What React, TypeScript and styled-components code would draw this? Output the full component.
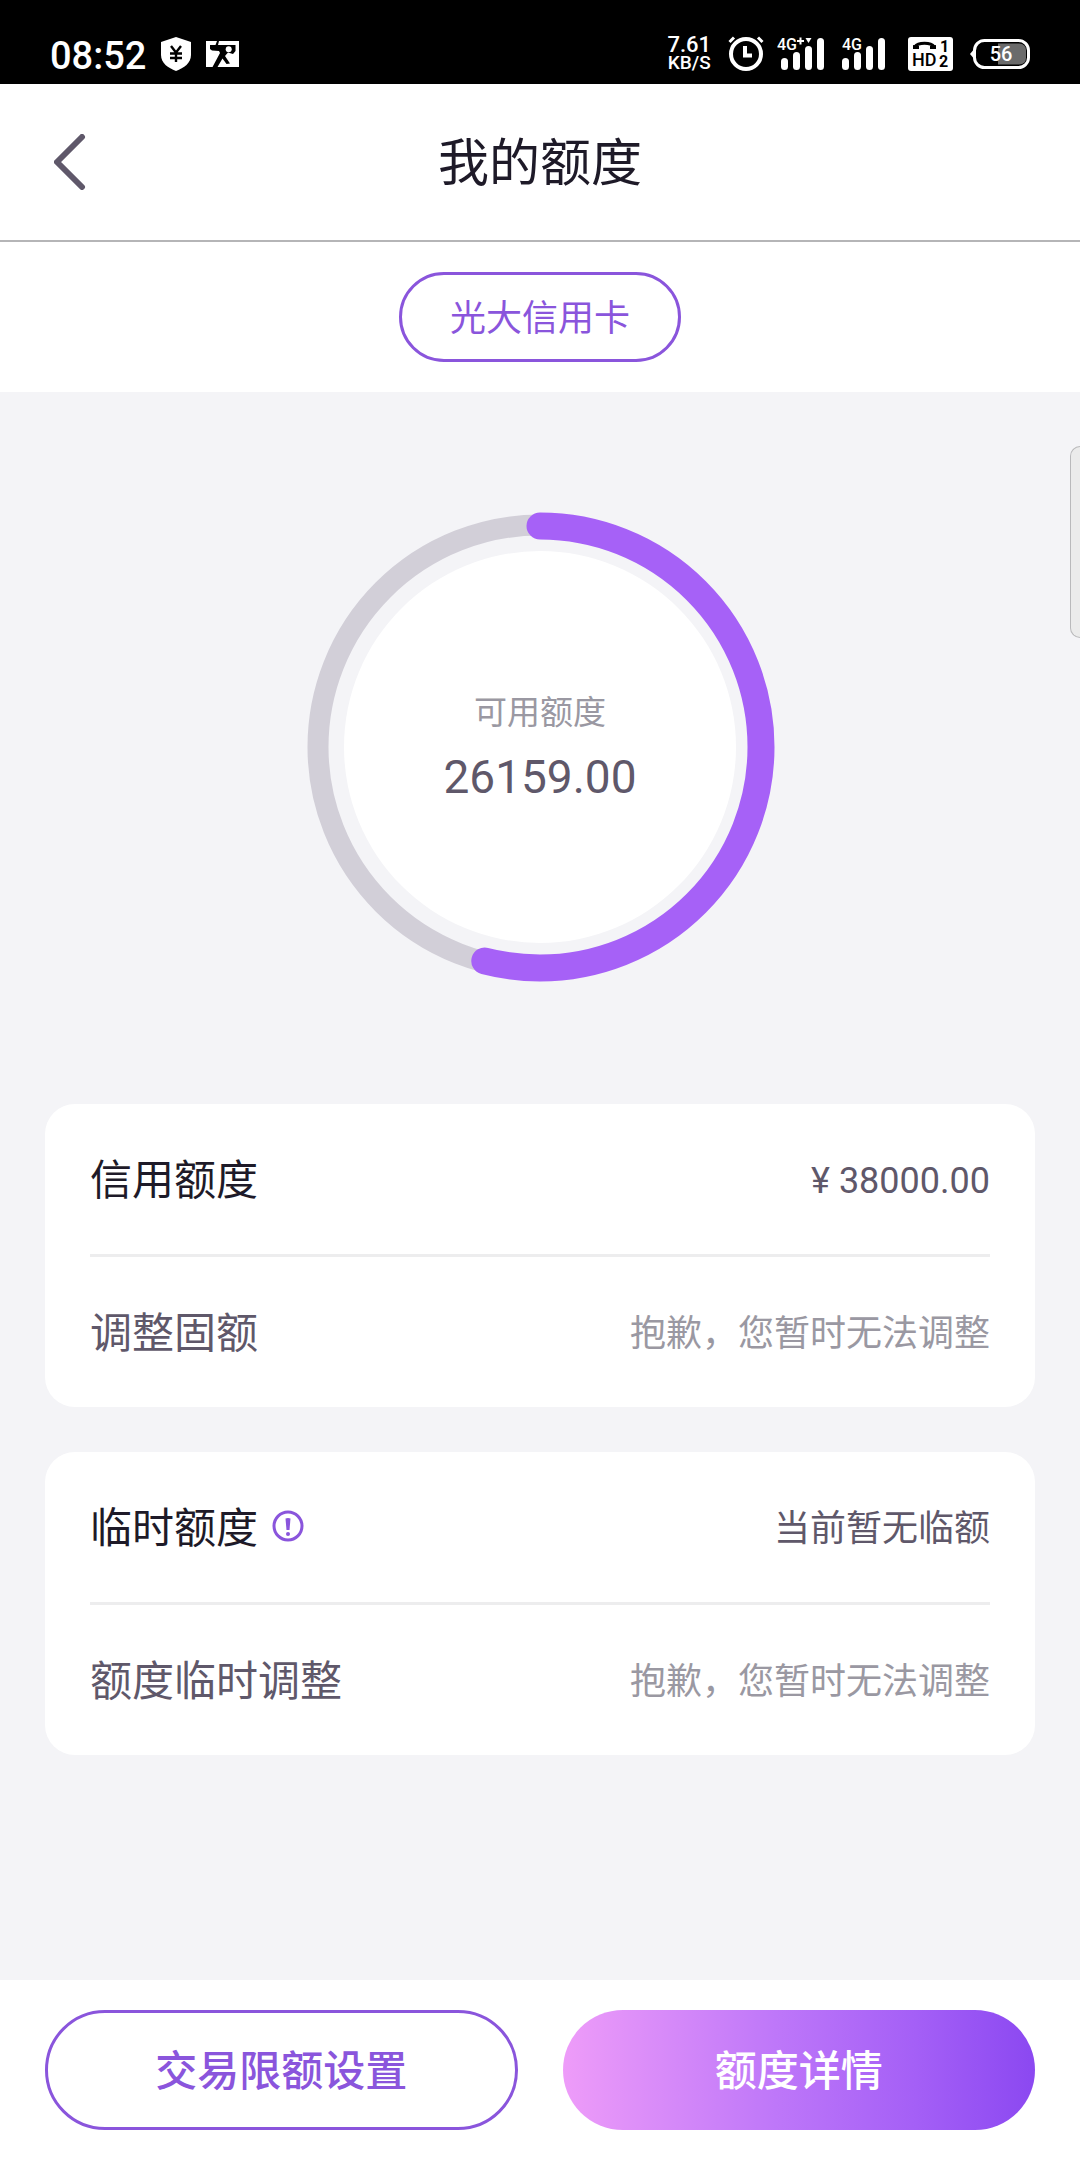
import React from "react";
import styled, { createGlobalStyle, css } from "styled-components";

const color = {
  ink: "#1e1a28",
  body: "#5f586a",
  muted: "#9a98a2",
  purple: "#8a55dc",
  ring: "#a661f7",
  track: "#d2cfd8",
  page: "#f4f4f7",
  rule: "#ededee",
};

const GlobalStyle = createGlobalStyle`
  *, *::before, *::after { box-sizing: border-box; }
  body {
    margin: 0;
    background: ${color.page};
    color: ${color.ink};
    font-family: Roboto, "Noto Sans CJK SC", sans-serif;
  }
  button { font: inherit; cursor: pointer; }
  h1, h2, p, dl, dt, dd { margin: 0; font-weight: 400; }
  svg { display: block; }
`;

const Screen = styled.div`
  position: relative;
  display: flex;
  flex-direction: column;
  min-height: 100vh;
`;

/* ---------- status bar ---------- */

const StatusBar = styled.div`
  display: flex;
  align-items: flex-end;
  justify-content: space-between;
  height: 84px;
  padding: 0 50px 10px;
  background: #000;
  color: #fff;
`;

const StatusGroup = styled.div<{ $gap: number }>`
  display: flex;
  align-items: center;
  gap: ${(p) => p.$gap}px;
  height: 40px;
`;

const Clock = styled.time`
  padding-top: 3px;
  font-size: 38px;
  font-weight: 500;
  line-height: 40px;
`;

const Speed = styled.div`
  display: flex;
  flex-direction: column;
  align-items: center;
  font-size: 22px;
  font-weight: 500;
  line-height: 18px;
`;

const SpeedUnit = styled.span`
  font-size: 19px;
  line-height: 18px;
`;

const ShieldIcon = () => (
  <svg width="30" height="34" viewBox="0 0 30 34" aria-hidden="true">
    <path d="M15 0 L30 5 V18 C30 26 23 31 15 34 C7 31 0 26 0 18 V5 Z" fill="#fff" />
    <path d="M10 9 L15 15.500 L20 9 M15 15.500 V25 M9 16.500 H21 M9 21 H21" fill="none" stroke="#000" strokeWidth="2.400" />
  </svg>
);

const PictureIcon = () => (
  <svg width="33" height="26" viewBox="0 0 33 26" aria-hidden="true">
    <path d="M0 0 H33 V26 H0 Z" fill="#fff" />
    <path d="M11 0 H13 L12 4 H29.500 V10 L27 13 L22 11.500 L19 15 L24 22.500 L20.500 23 L16.500 17.500 L11.500 26 H6.500 L14 12 L13 10 L6 9.500 L4 8 V4 H9.500 Z" fill="#000" />
    <circle cx="22.700" cy="8.300" r="3" fill="#fff" />
  </svg>
);

const AlarmIcon = () => (
  <svg width="36" height="36" viewBox="0 0 36 36" aria-hidden="true">
    <g fill="none" stroke="#fff">
      <circle cx="18" cy="18" r="15" strokeWidth="4" />
      <path d="M17 10 V19.500 H24" strokeWidth="4" />
      <path d="M1.500 6 L6 1.500 M34.500 6 L30 1.500" strokeWidth="3" />
    </g>
  </svg>
);

const SignalIcon = ({ plus }: { plus?: boolean }) => (
  <svg width={plus ? 52 : 49} height="36" viewBox={plus ? "0 0 52 36" : "4 0 49 36"} role="img" aria-label={plus ? "4G+" : "4G"}>
    <g fill="#fff">
      <rect x="4" y="22" width="7" height="12" rx="3.500" />
      <rect x="16" y="16" width="7" height="18" rx="3.500" />
      <rect x="28" y="10" width="7" height="24" rx="3.500" />
      <rect x="40" y="2" width="7" height="32" rx="3.500" />
      {plus && <path d="M28.500 2 H34.500 L31.500 7 Z" />}
    </g>
    <text x={plus ? 0 : 4} y="14" fill="#fff" stroke="#000" strokeWidth="2" paintOrder="stroke" fontSize="16" fontWeight="500">
      4G
    </text>
    {plus && <path d="M20 5 H27 M23.500 1.500 V8.500" stroke="#fff" strokeWidth="2" />}
  </svg>
);

const CallIcon = () => (
  <svg width="45" height="34" viewBox="0 0 45 34" role="img" aria-label="HD">
    <rect width="45" height="34" rx="3" fill="#fff" />
    <path d="M7 9.500 C10 5 23 5 26 9.500" fill="none" stroke="#000" strokeWidth="3" />
    <path d="M5 8 L11 9 V12 H5 Z M28 8 L22 9 V12 H28 Z" fill="#000" />
    <text x="4" y="29" fontSize="18" fontWeight="500">HD</text>
    <text x="32" y="15" fontSize="16" fontWeight="700">1</text>
    <text x="31" y="30" fontSize="16" fontWeight="700">2</text>
  </svg>
);

const BatteryIcon = () => (
  <svg width="60" height="30" viewBox="0 0 60 30" role="img" aria-label="56">
    <path d="M5 9 L0 15 L5 21 Z" fill="#fff" />
    <rect x="4.500" y="1.500" width="54" height="27" rx="10" fill="#000" stroke="#fff" strokeWidth="3" />
    <path d="M28 4.500 H49 Q56 5 56 11 V19 Q56 25 49 25.500 H28 Z" fill="#6b6b6b" />
    <text x="31" y="22" fill="#fff" fontSize="20" fontWeight="500" textAnchor="middle">56</text>
  </svg>
);

/* ---------- header ---------- */

const Header = styled.header`
  display: grid;
  grid-template-columns: 1fr auto 1fr;
  align-items: center;
  height: 158px;
  padding: 0 36px;
  background: #fff;
  border-bottom: 2px solid #b5b5b7;
`;

const BackButton = styled.button`
  justify-self: start;
  padding: 12px 18px;
  border: 0;
  background: none;
  color: ${color.body};
`;

const Title = styled.h1`
  padding-top: 4px;
  font-size: 51px;
  line-height: 72px;
`;

const CardPicker = styled.div`
  display: flex;
  justify-content: center;
  padding: 30px 45px;
  background: #fff;
`;

const pill = css`
  display: flex;
  align-items: center;
  justify-content: center;
  border: 3px solid ${color.purple};
  border-radius: 60px;
  background: #fff;
  color: ${color.purple};
`;

const Chip = styled.button`
  ${pill}
  height: 90px;
  padding: 4px 48px 0;
  font-size: 36px;
  line-height: 54px;
`;

/* ---------- gauge ---------- */

const Main = styled.main`
  display: flex;
  flex: 1;
  flex-direction: column;
  gap: 45px;
  padding: 120px 45px 45px;
`;

const Gauge = styled.section`
  display: grid;
  align-items: center;
  justify-items: center;
  margin-bottom: 77px;

  > * { grid-area: 1 / 1; }
`;

const GaugeText = styled.div`
  text-align: center;
  line-height: 64px;
  padding-bottom: 4px;
`;

const GaugeLabel = styled.p`
  color: ${color.muted};
  font-size: 33px;
`;

const GaugeValue = styled.p`
  color: ${color.body};
  font-size: 46px;
`;

const RADIUS = 221;
const LENGTH = 2 * Math.PI * RADIUS;

const GaugeRing = ({ ratio }: { ratio: number }) => (
  <svg width="470" height="470" viewBox="0 0 470 470" aria-hidden="true">
    <circle cx="235" cy="235" r="196" fill="#fff" />
    <circle cx="235" cy="235" r="222" fill="none" stroke={color.track} strokeWidth="21" />
    <circle
      cx="235"
      cy="235"
      r={RADIUS}
      fill="none"
      stroke={color.ring}
      strokeWidth="27"
      strokeLinecap="round"
      strokeDasharray={`${LENGTH * ratio} ${LENGTH}`}
      transform="rotate(-90 235 235)"
    />
  </svg>
);

/* ---------- cards ---------- */

const Card = styled.dl`
  padding: 0 45px;
  border-radius: 30px;
  background: #fff;
`;

const Row = styled.div`
  display: flex;
  align-items: center;
  justify-content: space-between;
  gap: 24px;
  height: 150px;
  padding-top: 4px;

  & + & {
    height: 153px;
    border-top: 3px solid ${color.rule};
  }
`;

const Term = styled.dt<{ $soft?: boolean }>`
  display: flex;
  align-items: center;
  gap: 14px;
  color: ${(p) => (p.$soft ? color.body : color.ink)};
  font-size: 42px;
  line-height: 60px;
`;

const Value = styled.dd<{ $soft?: boolean }>`
  color: ${(p) => (p.$soft ? color.muted : color.body)};
  font-size: 36px;
  line-height: 54px;
`;

const HintButton = styled.button`
  padding: 0 0 6px;
  border: 0;
  background: none;
  color: ${color.purple};
`;

const HintIcon = () => (
  <svg width="32" height="32" viewBox="0 0 32 32" aria-hidden="true">
    <circle cx="16" cy="16" r="14" fill="none" stroke="currentColor" strokeWidth="3" />
    <path d="M13.500 8.500 Q16 7.500 18.500 8.500 L17.500 20 H14.500 Z" fill="currentColor" />
    <circle cx="16" cy="24" r="2" fill="currentColor" />
  </svg>
);

/* ---------- footer ---------- */

const Footer = styled.footer`
  display: grid;
  grid-template-columns: 1fr 1fr;
  gap: 45px;
  padding: 30px 45px;
  background: #fff;
`;

const ActionButton = styled.button<{ $filled?: boolean }>`
  ${pill}
  height: 120px;
  padding-top: 4px;
  font-size: 42px;
  font-weight: 500;
  line-height: 60px;

  ${(p) =>
    p.$filled &&
    css`
      border: 0;
      background: linear-gradient(90deg, #ee9cf9 0%, #be77f9 45%, #a45ff6 75%, #8b48f1 100%);
      color: #fff;
    `}
`;

/* handle of the system side panel, floating over the page's right edge */
const EdgeHandle = styled.div`
  position: absolute;
  top: 446px;
  right: 0;
  width: 10px;
  height: 192px;
  border: 1px solid #b9b9bb;
  border-right: 0;
  border-radius: 10px 0 0 10px;
  background: #ebebeb;
`;

export default function App() {
  return (
    <Screen lang="zh-CN">
      <GlobalStyle />
      <StatusBar>
        <StatusGroup $gap={15}>
          <Clock>08:52</Clock>
          <ShieldIcon />
          <PictureIcon />
        </StatusGroup>
        <StatusGroup $gap={17}>
          <Speed>
            7.61
            <SpeedUnit>KB/S</SpeedUnit>
          </Speed>
          <StatusGroup $gap={13}>
            <AlarmIcon />
            <SignalIcon plus />
            <SignalIcon />
          </StatusGroup>
          <CallIcon />
          <BatteryIcon />
        </StatusGroup>
      </StatusBar>

      <Header>
        <BackButton aria-label="返回">
          <svg width="34" height="56" viewBox="0 0 34 56" aria-hidden="true">
            <path d="M28 3 L3 28 L28 53" fill="none" stroke="currentColor" strokeWidth="6" strokeLinecap="round" strokeLinejoin="round" />
          </svg>
        </BackButton>
        <Title>我的额度</Title>
      </Header>

      <CardPicker>
        <Chip>光大信用卡</Chip>
      </CardPicker>

      <Main>
        <Gauge>
          <GaugeRing ratio={0.54} />
          <GaugeText>
            <GaugeLabel>可用额度</GaugeLabel>
            <GaugeValue>26159.00</GaugeValue>
          </GaugeText>
        </Gauge>

        <Card>
          <Row>
            <Term>信用额度</Term>
            <Value>¥ 38000.00</Value>
          </Row>
          <Row>
            <Term $soft>调整固额</Term>
            <Value $soft>抱歉，您暂时无法调整</Value>
          </Row>
        </Card>

        <Card>
          <Row>
            <Term>
              临时额度
              <HintButton aria-label="说明">
                <HintIcon />
              </HintButton>
            </Term>
            <Value>当前暂无临额</Value>
          </Row>
          <Row>
            <Term $soft>额度临时调整</Term>
            <Value $soft>抱歉，您暂时无法调整</Value>
          </Row>
        </Card>
      </Main>

      <Footer>
        <ActionButton>交易限额设置</ActionButton>
        <ActionButton $filled>额度详情</ActionButton>
      </Footer>
      <EdgeHandle />
    </Screen>
  );
}
